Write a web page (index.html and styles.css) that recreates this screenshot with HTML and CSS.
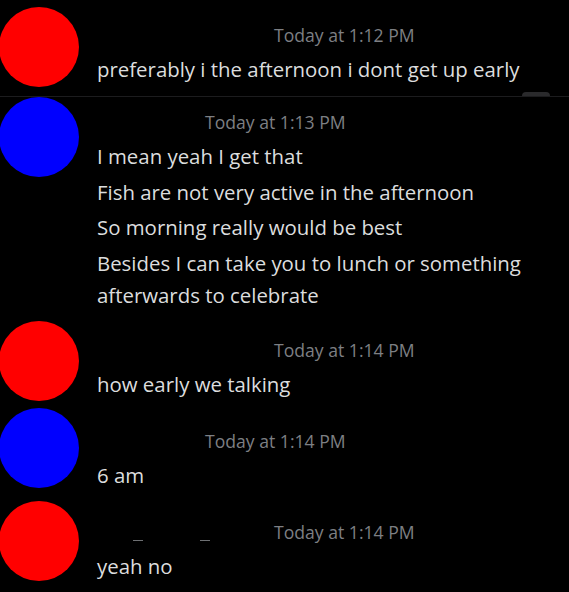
FILE: index.html
```html
<!DOCTYPE html>
<html>
<head>
<meta charset="utf-8">
<link rel="stylesheet" href="styles.css">
</head>
<body>
<div class="chat">
  <div class="msg m1">
    <div class="avatar red"></div>
    <div class="body">
      <div class="meta"><span class="name long"></span><span class="time">Today at 1:12 PM</span></div>
      <div class="line">preferably i the afternoon i dont get up early</div>
    </div>
    <div class="jump"></div>
  </div>
  <div class="msg m2">
    <div class="avatar blue"></div>
    <div class="body">
      <div class="meta"><span class="name short"></span><span class="time">Today at 1:13 PM</span></div>
      <div class="line">I mean yeah I get that</div>
      <div class="line">Fish are not very active in the afternoon</div>
      <div class="line">So morning really would be best</div>
      <div class="line">Besides I can take you to lunch or something afterwards to celebrate</div>
    </div>
  </div>
  <div class="msg m3">
    <div class="avatar red"></div>
    <div class="body">
      <div class="meta"><span class="name long"></span><span class="time">Today at 1:14 PM</span></div>
      <div class="line">how early we talking</div>
    </div>
  </div>
  <div class="msg m4">
    <div class="avatar blue"></div>
    <div class="body">
      <div class="meta"><span class="name short"></span><span class="time">Today at 1:14 PM</span></div>
      <div class="line">6 am</div>
    </div>
  </div>
  <div class="msg m5">
    <div class="avatar red"></div>
    <div class="body">
      <div class="meta"><span class="name long"><span class="us u1"></span><span class="us u2"></span></span><span class="time">Today at 1:14 PM</span></div>
      <div class="line">yeah no</div>
    </div>
  </div>
</div>
</body>
</html>
```

FILE: styles.css
```css
html, body {
  margin: 0;
  padding: 0;
  background: #000;
}
body {
  width: 569px;
  height: 592px;
  overflow: hidden;
  font-family: "Open Sans", "Noto Sans", sans-serif;
}
.chat {
  display: flex;
  flex-direction: column;
}
.msg {
  position: relative;
  display: flex;
  align-items: flex-start;
}
.avatar {
  flex: none;
  width: 80px;
  height: 80px;
  border-radius: 50%;
  margin-left: -1px;
}
.red { background: #ff0000; }
.blue { background: #0000ff; }
.body {
  flex: 1;
  margin-left: 18px;
  padding-right: 16px;
}
.meta {
  display: flex;
  align-items: center;
  height: 24px;
  margin-bottom: 6px;
}
.name {
  display: flex;
  flex: none;
  height: 24px;
  position: relative;
}
.name.long { width: 177px; }
.name.short { width: 108px; }
.us {
  position: absolute;
  top: 20px;
  width: 10px;
  height: 1px;
  background: #6e7073;
}
.u1 { left: 36px; }
.u2 { left: 103px; }
.time {
  font-size: 17.6px;
  line-height: 24px;
  color: #7d7f83;
  white-space: nowrap;
}
.line {
  font-size: 20.4px;
  line-height: 32px;
  color: #dcddde;
  margin-top: 3.5px;
}
.meta + .line { margin-top: 0; }

.m1 { height: 96px; border-bottom: 1px solid #1c1c1e; }
.m1 .avatar { margin-top: 7px; }
.m1 .body { padding-top: 23px; }
.jump {
  position: absolute;
  right: 19px;
  bottom: 0;
  width: 28px;
  height: 4px;
  border-radius: 14px 14px 0 0;
  background: #2a2a2c;
}

.m2 .avatar { margin-top: 0; }
.m2 .body { padding-top: 13px; }

.m3 .avatar { margin-top: 10.5px; }
.m3 .body { padding-top: 27.5px; }

.m4 .avatar { margin-top: 7px; }
.m4 .body { padding-top: 28px; }

.m5 .avatar { margin-top: 10px; }
.m5 .body { padding-top: 29px; }
```
